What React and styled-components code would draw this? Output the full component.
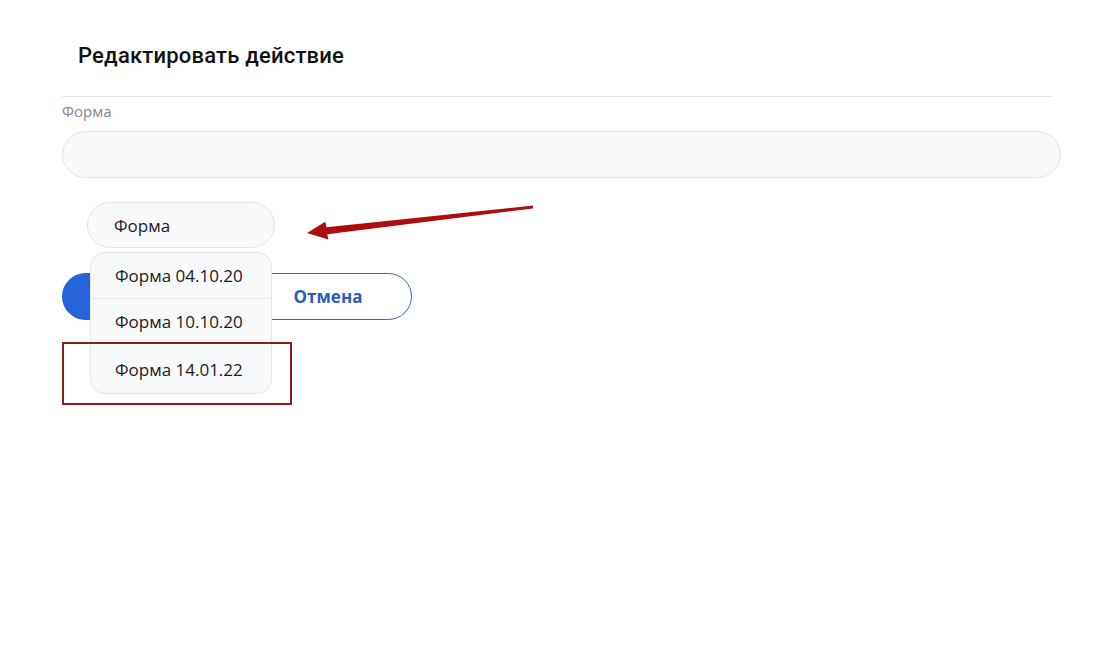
import styled, { createGlobalStyle } from "styled-components";

const GlobalStyle = createGlobalStyle`
  html, body {
    margin: 0;
    padding: 0;
    background: #ffffff;
  }
  body {
    font-family: "Open Sans", "Liberation Sans", sans-serif;
    color: #1c1c1c;
  }
`;

const options = ["Форма 04.10.20", "Форма 10.10.20", "Форма 14.01.22"];

const App = () => {
  return (
    <>
      <GlobalStyle />
      <Page>
        <Header>
          <Title>Редактировать действие</Title>
        </Header>

        <Label>Форма</Label>
        <Input />

        <SelectWrap>
          <SelectBox>Форма</SelectBox>
          <Menu>
            {options.map((o, i) => (
              <MenuItem key={o} $divider={i === 0}>
                {o}
              </MenuItem>
            ))}
          </Menu>
        </SelectWrap>

        <Buttons>
          <PrimaryButton>Сохранить</PrimaryButton>
          <OutlineButton>Отмена</OutlineButton>
        </Buttons>

        <Arrow viewBox="0 0 240 42" aria-hidden="true">
          <polygon
            points="232.9,5.6 26.5,27.2 25.2,21.8 7,33 28.4,39.6 27.3,34.2 233.1,8.4"
            fill="#ae0d0d"
          />
        </Arrow>
        <Highlight />
      </Page>
    </>
  );
};

export default App;

const Page = styled.div`
  position: relative;
  box-sizing: border-box;
  width: 1103px;
  min-height: 647px;
  padding: 0 42px 0 62px;
`;

const Header = styled.div`
  padding: 43px 16px 27px;
  margin-right: 8px;
  border-bottom: 1px solid #e6e7ea;
`;

const Title = styled.h1`
  margin: 0;
  font-family: Roboto, "Liberation Sans", sans-serif;
  font-weight: 500;
  font-size: 22px;
  line-height: 26px;
  letter-spacing: 0.2px;
  color: #111111;
`;

const Label = styled.div`
  margin-top: 4px;
  font-size: 15px;
  line-height: 20px;
  color: #888888;
`;

const Input = styled.div`
  box-sizing: border-box;
  margin-top: 10px;
  height: 47px;
  border: 1px solid #e2e4e8;
  border-radius: 24px;
  background: #f8f9fb;
`;

const SelectWrap = styled.div`
  position: relative;
  margin: 24px 0 0 25px;
  width: 188px;
`;

const SelectBox = styled.div`
  box-sizing: border-box;
  height: 46px;
  padding-left: 26px;
  display: flex;
  align-items: center;
  border: 1px solid #e2e4e8;
  border-radius: 23px;
  background: #f8f9fb;
  font-size: 17px;
  color: #1a1a1a;
`;

const Menu = styled.div`
  position: absolute;
  z-index: 2;
  top: calc(100% + 4px);
  left: 3px;
  box-sizing: border-box;
  width: 182px;
  border: 1px solid #e2e4e8;
  border-radius: 15px;
  background: #f8f9fb;
  overflow: hidden;
`;

const MenuItem = styled.div`
  height: 45px;
  padding-left: 24px;
  display: flex;
  align-items: center;
  font-size: 17px;
  color: #1a1a1a;
  border-bottom: 1px solid ${(p) => (p.$divider ? "#e6e7ea" : "transparent")};
  &:last-child {
    border-bottom: none;
    height: 48px;
  }
`;

const Buttons = styled.div`
  display: flex;
  gap: 12px;
  margin-top: 25px;
`;

const PrimaryButton = styled.button`
  box-sizing: border-box;
  width: 170px;
  height: 47px;
  border: none;
  border-radius: 24px;
  background: #2563da;
  color: #ffffff;
  font-family: "Open Sans", "Liberation Sans", sans-serif;
  font-weight: 700;
  font-size: 17px;
`;

const OutlineButton = styled.button`
  box-sizing: border-box;
  width: 168px;
  height: 47px;
  border: 1px solid #3b63ad;
  border-radius: 24px;
  background: #ffffff;
  color: #2d5cb9;
  font-family: "Open Sans", "Liberation Sans", sans-serif;
  font-weight: 700;
  font-size: 17px;
`;

const Arrow = styled.svg`
  position: absolute;
  z-index: 3;
  left: 300px;
  top: 200px;
  width: 240px;
  height: 42px;
`;

const Highlight = styled.div`
  position: absolute;
  z-index: 3;
  left: 62px;
  top: 342px;
  box-sizing: border-box;
  width: 230px;
  height: 63px;
  border: 2px solid #8b1d1d;
`;
